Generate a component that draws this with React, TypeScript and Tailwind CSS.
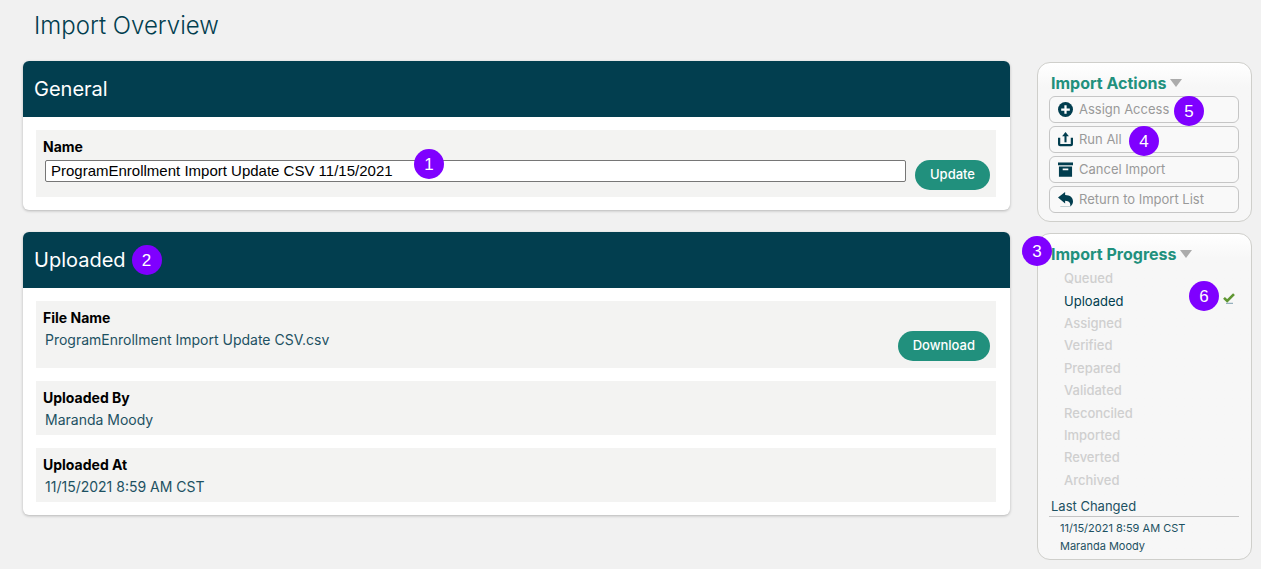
import type { ReactNode } from "react";

const steps = [
  "Queued",
  "Uploaded",
  "Assigned",
  "Verified",
  "Prepared",
  "Validated",
  "Reconciled",
  "Imported",
  "Reverted",
  "Archived"
];
const currentStep = "Uploaded";

export default function App() {
  return (
    <div className="min-h-screen bg-[#f1f1f1] pt-[10px] pr-[9px] pb-2 pl-[23px] font-[Inter,sans-serif] text-[#1d5162]">
      <h1 className="mb-[19px] pl-[11px] text-2xl font-light text-[#023e4f]">Import Overview</h1>
      <div className="flex items-start gap-[27px]">
        <main className="flex min-w-0 flex-1 flex-col gap-[22px]">
          <Card title="General">
            <Row action="Update">
              <label htmlFor="import-name" className="block text-sm leading-5 font-bold text-black">Name</label>
              <div className="relative mt-[3px] ml-[2px]">
                <input
                  id="import-name"
                  type="text"
                  defaultValue="ProgramEnrollment Import Update CSV 11/15/2021"
                  className="block h-[22px] w-full rounded-[2px] border border-[#767676] bg-white px-[5px] font-['Liberation_Sans',sans-serif] text-[15px] text-black"
                />
                <Marker className="absolute -top-[11px] left-[369px]">1</Marker>
              </div>
            </Row>
          </Card>

          <Card title="Uploaded" marker="2">
            <Row action="Download">
              <Field label="File Name" value="ProgramEnrollment Import Update CSV.csv"/>
            </Row>
            <Row>
              <Field label="Uploaded By" value="Maranda Moody"/>
            </Row>
            <Row>
              <Field label="Uploaded At" value="11/15/2021 8:59 AM CST"/>
            </Row>
          </Card>
        </main>

        <aside className="flex w-[215px] shrink-0 flex-col gap-[11px] pt-px">
          <Panel title="Import Actions">
            <div className="flex flex-col gap-[3px] pt-[2px] pb-2">
              <ActionButton icon={<PlusIcon/>} label="Assign Access">
                <Marker className="absolute top-0 left-[125px]">5</Marker>
              </ActionButton>
              <ActionButton icon={<RunIcon/>} label="Run All">
                <Marker className="absolute top-0 left-[80px]">4</Marker>
              </ActionButton>
              <ActionButton icon={<ArchiveIcon/>} label="Cancel Import"/>
              <ActionButton icon={<ReturnIcon/>} label="Return to Import List"/>
            </div>
          </Panel>

          <Panel title="Import Progress" marker={<Marker className="absolute top-[2px] -left-4">3</Marker>}>
            <ol className="flex h-[226px] flex-col pt-[2px] text-[13px] leading-5">
              {steps.map(step => (
                <li key={step} className={step === currentStep ? "relative flex flex-1 items-center pl-[15px] text-[#023e4f]" : "flex flex-1 items-center pl-[15px] font-medium text-[#cfcfcf]"}>
                  {step}
                  {step === currentStep && (
                    <>
                      <Marker className="absolute -top-2 left-[140px]">6</Marker>
                      <CheckIcon/>
                    </>
                  )}
                </li>
              ))}
            </ol>
            <h3 className="mt-[5px] border-b border-[#c4c4c4] pl-[2px] text-[13px] leading-5">Last Changed</h3>
            <div className="pt-[2px] pb-1 pl-[11px] text-[11px] leading-[18px]">
              <p>11/15/2021 8:59 AM CST</p>
              <p>Maranda Moody</p>
            </div>
          </Panel>
        </aside>
      </div>
    </div>
  );
}

function Card(props: { title: string; marker?: string; children: ReactNode }) {
  return (
    <section className="rounded-md bg-white shadow-[0_1px_3px_rgba(0,0,0,0.25)]">
      <div className="flex h-14 items-center gap-[6px] rounded-t-md bg-[#023e4f] pl-[11px] text-white">
        <h2 className="text-xl">{props.title}</h2>
        {props.marker !== undefined && <Marker>{props.marker}</Marker>}
      </div>
      <div className="flex flex-col gap-[13px] py-[13px] pr-[14px] pl-[13px]">{props.children}</div>
    </section>
  );
}

function Row(props: { action?: string; children: ReactNode }) {
  return (
    <div className="flex gap-[9px] bg-[#f3f3f2] pt-[7px] pr-[6px] pb-[5px] pl-[7px]">
      <div className="min-w-0 flex-1">{props.children}</div>
      {props.action !== undefined && (
        <button type="button" className="mt-[23px] mb-[2px] h-[30px] rounded-full bg-[#21907d] px-[15px] text-[13px] font-medium text-white">
          {props.action}
        </button>
      )}
    </div>
  );
}

function Field(props: { label: string; value: string }) {
  return (
    <dl className="text-sm leading-5">
      <dt className="font-bold text-black">{props.label}</dt>
      <dd className="mt-[2px] ml-[2px]">{props.value}</dd>
    </dl>
  );
}

function Panel(props: { title: string; marker?: ReactNode; children: ReactNode }) {
  return (
    <section className="relative rounded-[13px] border border-[#cfcfcb] bg-linear-to-b from-white to-[#f7f7f7] to-[24px] pt-[9px] pr-3 pl-[11px]">
      <h2 className="flex items-center gap-1 pl-[2px] text-base leading-[22px] font-bold text-[#21907d]">
        {props.title}
        <svg viewBox="0 0 12 8" className="h-2 w-3 fill-[#ababab]" aria-hidden="true">
          <path d="M0 0h12L6 8z"/>
        </svg>
      </h2>
      {props.marker}
      {props.children}
    </section>
  );
}

function ActionButton(props: { icon: ReactNode; label: string; children?: ReactNode }) {
  return (
    <div className="relative">
      <button type="button" className="flex h-[27px] w-full items-center gap-[6px] rounded-md border border-[#c6c6c6] bg-[#f9f9f9] pl-2 text-[13px] text-[#999999]">
        {props.icon}
        {props.label}
      </button>
      {props.children}
    </div>
  );
}

function Marker(props: { className?: string; children: ReactNode }) {
  return (
    <span className={`${props.className ?? ""} flex size-[30px] items-center justify-center rounded-full bg-[#7f00ff] font-['Liberation_Sans',sans-serif] text-[17px] leading-none font-normal text-white`}>
      {props.children}
    </span>
  );
}

function PlusIcon() {
  return (
    <svg viewBox="0 0 16 16" className="size-[15px] shrink-0" aria-hidden="true">
      <circle cx="8" cy="8" r="8" fill="#023e4f"/>
      <path d="M8 3.4v9.2M3.4 8h9.2" stroke="#fff" strokeWidth="2.4"/>
    </svg>
  );
}

function RunIcon() {
  return (
    <svg viewBox="0 0 16 16" className="size-[15px] shrink-0" fill="none" stroke="#023e4f" aria-hidden="true">
      <path d="M1.2 6v7a1 1 0 0 0 1 1h11.6a1 1 0 0 0 1-1V6" strokeWidth="2.4"/>
      <path d="M8 11V3" strokeWidth="2.2"/>
      <path d="M8 0L4.4 4.4h7.2z" fill="#023e4f" stroke="none"/>
    </svg>
  );
}

function ArchiveIcon() {
  return (
    <svg viewBox="0 0 16 16" className="size-[15px] shrink-0 fill-[#023e4f]" aria-hidden="true">
      <path d="M0 .5h16v3H0z"/>
      <path fillRule="evenodd" d="M1 4.8h14v11H1zM5 6.8v1.9h6V6.8z"/>
    </svg>
  );
}

function ReturnIcon() {
  return (
    <svg viewBox="0 0 16 16" className="size-[15px] shrink-0 fill-[#023e4f]" aria-hidden="true">
      <path d="M0 5.8L7.6 0v3.3C13 3.4 16 6 16 10.2c0 2.3-1 4.1-3 5.3.7-3.8-.8-6-5.4-6.2v3z"/>
      <path d="M2.5 15.4h10.5v.6H2.5z" opacity=".4"/>
    </svg>
  );
}

function CheckIcon() {
  return (
    <svg viewBox="0 0 12 11" className="absolute top-1 right-1 h-[11px] w-3" fill="none" aria-hidden="true">
      <path d="M1 4.8L4.2 8L11 1.2" stroke="#5f9632" strokeWidth="2.6"/>
      <path d="M3 10.3h7" stroke="#6f94a8" strokeWidth=".9"/>
    </svg>
  );
}
